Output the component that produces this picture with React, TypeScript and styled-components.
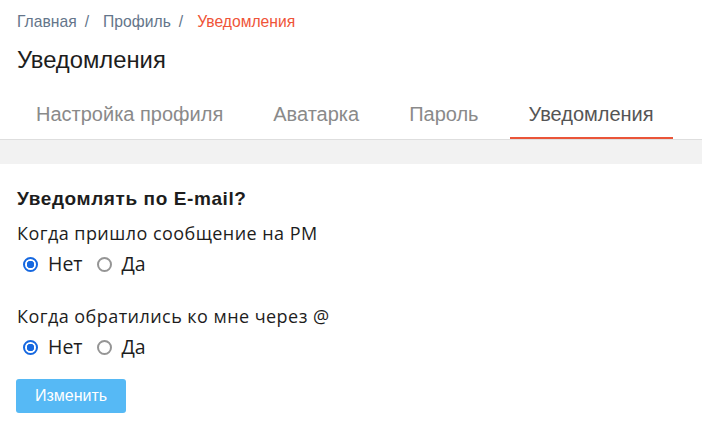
import React from 'react';
import styled, { createGlobalStyle } from 'styled-components';

const GlobalStyle = createGlobalStyle`
    body {
        margin : 0;
        background : #ffffff;
        font-family : "Liberation Sans", Arial, sans-serif;
    }
`;

const Page = styled.div`
    width : 702px;
`;
const Header = styled.header`
    padding : 13px 17px 0;
`;
const Crumbs = styled.nav`
    display : flex;
    font-size : 15.7px;
    line-height : 18px;
    color : #64758a;
`;
const Crumb = styled.span<{ $active?: boolean }>`
    color : ${p => p.$active ? '#ef5438' : '#64758a'};
`;
const Sep = styled.span`
    padding : 0 14px 0 8px;
    color : #64758a;
`;
const Title = styled.h1`
    margin : 15px 0 0;
    font-size : 23.8px;
    font-weight : normal;
    line-height : 28px;
    color : #1d1d1d;
`;
const Tabs = styled.div`
    display : flex;
    gap : 12px;
    margin-top : 18px;
    padding : 0 17px;
    border-bottom : 1px solid #dedede;
`;
const Tab = styled.div<{ $active?: boolean }>`
    padding : 10px 19px 11px;
    font-size : 20px;
    line-height : 24px;
    color : ${p => p.$active ? '#555555' : '#8a8a8a'};
    border-bottom : 2px solid ${p => p.$active ? '#ea5538' : 'transparent'};
`;
const Band = styled.div`
    height : 24px;
    background : #f2f2f2;
`;
const Form = styled.form`
    padding : 23px 17px 0;
    font-family : "Open Sans", "Noto Sans", sans-serif;
    color : #1d1d1d;
`;
const Question = styled.h2`
    margin : 0;
    font-family : "Liberation Sans", Arial, sans-serif;
    font-size : 19px;
    letter-spacing : 0.6px;
    font-weight : bold;
    line-height : 24px;
`;
const Group = styled.div`
    margin-top : 10px;
    & + & {
        margin-top : 27px;
    }
`;
const Label = styled.div`
    font-size : 18px;
    letter-spacing : 0.45px;
    line-height : 24px;
`;
const Options = styled.div`
    display : flex;
    align-items : center;
    margin-top : 6px;
    padding-left : 6px;
    gap : 14px;
`;
const Option = styled.label`
    display : flex;
    align-items : center;
    gap : 10px;
    font-size : 19.5px;
    line-height : 26px;
`;
const Radio = styled.input.attrs({ type : 'radio' })`
    appearance : none;
    margin : 0;
    width : 15px;
    height : 15px;
    box-sizing : border-box;
    border-radius : 50%;
    border : 2px solid #959595;
    background : #ffffff;
    &:checked {
        border-color : #1668e0;
        background : radial-gradient(circle, #1668e0 0 3.5px, #ffffff 4px);
    }
`;
const Button = styled.button`
    display : block;
    margin : 19px 0 0 -1px;
    width : 110px;
    height : 34px;
    border : none;
    border-radius : 3px;
    background : #56b9f5;
    color : #ffffff;
    font-family : "Liberation Sans", Arial, sans-serif;
    font-size : 16px;
`;

const questions = [
    { id : 'pm', label : 'Когда пришло сообщение на PM' },
    { id : 'mention', label : 'Когда обратились ко мне через @' },
];

const App: React.FC = () => {
    return (
        <Page>
            <GlobalStyle />
            <Header>
                <Crumbs>
                    <Crumb>Главная</Crumb><Sep>/</Sep>
                    <Crumb>Профиль</Crumb><Sep>/</Sep>
                    <Crumb $active>Уведомления</Crumb>
                </Crumbs>
                <Title>Уведомления</Title>
            </Header>
            <Tabs>
                <Tab>Настройка профиля</Tab>
                <Tab>Аватарка</Tab>
                <Tab>Пароль</Tab>
                <Tab $active>Уведомления</Tab>
            </Tabs>
            <Band />
            <Form onSubmit={e => e.preventDefault()}>
                <Question>Уведомлять по E-mail?</Question>
                {questions.map(q => (
                    <Group key={q.id}>
                        <Label>{q.label}</Label>
                        <Options>
                            <Option><Radio name={q.id} defaultChecked />Нет</Option>
                            <Option><Radio name={q.id} />Да</Option>
                        </Options>
                    </Group>
                ))}
                <Button type="submit">Изменить</Button>
            </Form>
        </Page>
    );
};

export default App;
